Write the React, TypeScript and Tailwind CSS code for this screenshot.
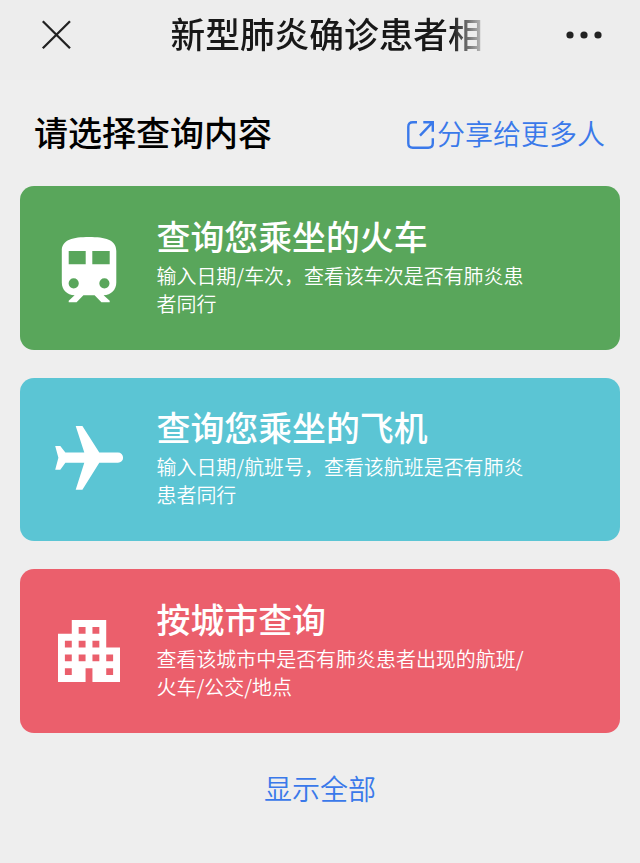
import type { ReactNode } from "react"
import { clsx } from "clsx"

function CloseIcon() {
  return (
    <svg className="h-[30px] w-[30px]" viewBox="0 0 30 30" fill="none" stroke="#222" strokeWidth="2.3">
      <path d="M1.8 1.3 29 28.2M29 1.3 1.8 28.2" />
    </svg>
  )
}

function MoreIcon() {
  return (
    <svg className="h-2 w-9" viewBox="0 0 36 8" fill="#222">
      <circle cx="4" cy="4" r="3.6" />
      <circle cx="18" cy="4" r="3.6" />
      <circle cx="32" cy="4" r="3.6" />
    </svg>
  )
}

function ShareIcon() {
  return (
    <svg className="h-[30px] w-[30px]" viewBox="0 0 30 30" fill="none" stroke="currentColor" strokeWidth="2.4">
      <path d="M11 2.2H6.8Q2.3 2.2 2.3 6.7V23.2Q2.3 27.7 6.8 27.7H22.3Q26.8 27.7 26.8 23.2V18.2" />
      <path d="M17.3 2.2H26.8V11.7M26.8 2.2 14 15.6" />
    </svg>
  )
}

function TrainIcon() {
  return (
    <svg className="h-[66px] w-14" viewBox="0 0 56 66" fill="#fff">
      <path
        fillRule="evenodd"
        d="M28 0C12 0 .8 2.6 .8 14V45.5C.8 52.8 6 58 13.6 58.3L7.7 63.8V65.2H15.6L22.4 58.3H33.6L40.4 65.2H48.7V63.8L42.6 58.3C50 58 55.3 52.8 55.3 45.5V14C55.3 2.6 44 0 28 0ZM7.7 14H24.7V27.3H7.7ZM31.3 14H48.7V27.3H31.3ZM12.7 41.2a5.1 5.1 0 1 1 0 10.2a5.1 5.1 0 1 1 0-10.2ZM43.4 41.2a5.1 5.1 0 1 1 0 10.2a5.1 5.1 0 1 1 0-10.2Z"
      />
    </svg>
  )
}

function PlaneIcon() {
  return (
    <svg className="mb-[7px] h-[66px] w-[70px]" viewBox="0 0 70 66" fill="#fff">
      <path d="M1.2 21H6.3L11.4 27.6H30.3L21.7 1H28.4L45.3 27.6H64A5.1 5.1 0 0 1 64 37.8H45.3L28.4 64.7H21.7L30.3 37.8H11.4L6.3 44.7H1.2L4.4 32.8Z" />
    </svg>
  )
}

function CityIcon() {
  return (
    <svg className="mb-1 h-[62px] w-[62px]" viewBox="0 0 9 9" fill="#fff">
      <path
        fillRule="evenodd"
        d="M2 0H7V4H9V9H5V7H4V9H0V2H2ZM3 1V2H4V1ZM5 1V2H6V1ZM1 3V4H2V3ZM3 3V4H4V3ZM5 3V4H6V3ZM1 5V6H2V5ZM3 5V6H4V5ZM5 5V6H6V5ZM7 5V6H8V5ZM1 7V8H2V7ZM7 7V8H8V7Z"
      />
    </svg>
  )
}

interface QueryCardProps {
  title: string
  /** Description, one entry per line */
  lines: string[]
  icon: ReactNode
  className: string
}

function QueryCard({ title, lines, icon, className }: QueryCardProps) {
  return (
    <button type="button" className={clsx("flex w-full items-center rounded-[14px] text-left text-white", className)}>
      <span className="flex w-[137px] shrink-0 justify-center pt-1">{icon}</span>
      <span className="-ml-[0.5px] flex flex-col pb-[7px]">
        <span className="pb-0.5 text-[33.9px] leading-[49px] font-medium">{title}</span>
        <span className="text-[19.97px] leading-7 font-[350]">
          {lines.map((line) => (
            <span key={line} className="block whitespace-nowrap">{line}</span>
          ))}
        </span>
      </span>
    </button>
  )
}

export default function App() {
  return (
    <div lang="zh-CN" className="h-[863px] w-[640px] overflow-hidden bg-[#eeeeee] font-['Noto_Sans_CJK_SC',sans-serif]">
      <header className="flex h-20 items-start justify-between bg-[#ededed] pr-[38px] pl-[41px]">
        <button type="button" aria-label="关闭" className="pt-5">
          <CloseIcon />
        </button>
        {/* The title is cut off and fades out on the right */}
        <h1 className="ml-4 w-[312px] overflow-hidden bg-linear-to-r from-[#181818] from-90% to-[#181818]/20 bg-clip-text pt-2 text-[34.7px] leading-[50px] font-medium whitespace-nowrap text-transparent">
          新型肺炎确诊患者相
        </h1>
        <button type="button" aria-label="更多" className="pt-[31px]">
          <MoreIcon />
        </button>
      </header>

      <main className="px-5">
        <div className="flex h-[106px] items-center justify-between pr-[15px] pl-[14px]">
          <h2 className="pb-[3px] text-[34px] leading-[50px] font-medium text-black">请选择查询内容</h2>
          <button type="button" className="flex items-center gap-px text-[28px] leading-10 text-[#3a79ea]">
            <span className="pt-1">
              <ShareIcon />
            </span>
            <span className="font-[350]">分享给更多人</span>
          </button>
        </div>

        <div className="flex flex-col gap-7">
          <QueryCard
            title="查询您乘坐的火车"
            lines={["输入日期/车次，查看该车次是否有肺炎患", "者同行"]}
            icon={<TrainIcon />}
            className="h-[164px] bg-[#59a65b]"
          />
          <QueryCard
            title="查询您乘坐的飞机"
            lines={["输入日期/航班号，查看该航班是否有肺炎", "患者同行"]}
            icon={<PlaneIcon />}
            className="h-[163px] bg-[#5bc5d4] pb-px"
          />
          <QueryCard
            title="按城市查询"
            lines={["查看该城市中是否有肺炎患者出现的航班/", "火车/公交/地点"]}
            icon={<CityIcon />}
            className="h-[164px] bg-[#eb5f6c]"
          />
        </div>

        <button type="button" className="mx-auto mt-[35px] block text-[28px] leading-10 font-[350] text-[#3a79ea]">
          显示全部
        </button>
      </main>
    </div>
  )
}
